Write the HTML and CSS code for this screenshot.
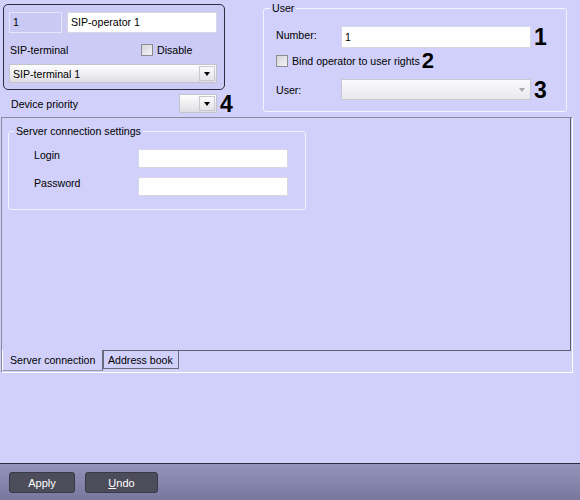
FILE: index.html
```html
<!DOCTYPE html>
<html>
<head>
<meta charset="utf-8">
<link rel="stylesheet" href="styles.css">
</head>
<body>
<div class="window">
  <div class="top">
    <div class="left-col">
      <div class="op-panel">
        <div class="op-row">
          <div class="field field-id">1</div>
          <div class="field field-name">SIP-operator 1</div>
        </div>
        <div class="term-row">
          <span class="term-label">SIP-terminal</span>
          <span class="check"><span class="box"></span>Disable</span>
        </div>
        <div class="combo combo-term">
          <span class="combo-text">SIP-terminal 1</span>
          <span class="combo-btn"><span class="arrow"></span></span>
        </div>
      </div>
      <div class="prio-row">
        <span class="prio-label">Device priority</span>
        <div class="combo combo-prio">
          <span class="combo-text"></span>
          <span class="combo-btn"><span class="arrow"></span></span>
        </div>
        <span class="num">4</span>
      </div>
    </div>
    <fieldset class="group user-group">
      <legend>User</legend>
      <div class="u-row">
        <span class="u-label u-label-num">Number:</span>
        <div class="field field-number">1</div>
        <span class="num">1</span>
      </div>
      <div class="u-row u-row-check">
        <span class="check"><span class="box"></span>Bind operator to user rights</span>
        <span class="num num-small">2</span>
      </div>
      <div class="u-row u-row-user">
        <span class="u-label">User:</span>
        <div class="combo combo-user">
          <span class="combo-text"></span>
          <span class="combo-btn-flat"><span class="arrow arrow-dis"></span></span>
        </div>
        <span class="num">3</span>
      </div>
    </fieldset>
  </div>

  <div class="tabctl">
    <div class="page">
      <fieldset class="group conn-group">
        <legend>Server connection settings</legend>
        <div class="c-row">
          <span class="c-label">Login</span>
          <div class="field field-conn"></div>
        </div>
        <div class="c-row c-row-2">
          <span class="c-label">Password</span>
          <div class="field field-conn"></div>
        </div>
      </fieldset>
    </div>
    <div class="tabs">
      <div class="tab tab-active">Server connection</div>
      <div class="tab tab-idle">Address book</div>
    </div>
  </div>

  <div class="spacer"></div>

  <div class="bar">
    <div class="btn btn-apply">Apply</div>
    <div class="btn btn-undo"><u>U</u>ndo</div>
  </div>
</div>
</body>
</html>
```
FILE: styles.css
```css
* { box-sizing: border-box; }
html, body { margin: 0; padding: 0; }
body {
  font-family: "Liberation Sans", Arial, sans-serif;
  font-size: 10.6px;
  color: #000;
  background: #d0d0fa;
}
.window {
  width: 580px;
  height: 500px;
  display: flex;
  flex-direction: column;
  background: #d0d0fa;
  overflow: hidden;
}

/* ---------- top area ---------- */
.top {
  height: 117px;
  display: flex;
  flex-shrink: 0;
}
.left-col {
  margin-left: 3px;
  padding-top: 4px;
  width: 231px;
}
.op-panel {
  width: 222px;
  height: 86px;
  border: 1px solid #2c2c44;
  border-radius: 5px;
  background: #cbcbf5;
  padding: 7px 7px 0 5px;
}
.op-row {
  display: flex;
  gap: 5px;
  height: 21px;
}
.field {
  height: 100%;
  border: 1px solid #d8d8e4;
  background: #fff;
  padding-left: 3px;
  display: flex;
  align-items: center;
  line-height: 13px;
}
.field-id {
  width: 53px;
  background: #c9c9f3;
  border-color: #e6e6ff;
}
.field-name { width: 150px; }

.term-row {
  margin-top: 10px;
  height: 13px;
  display: flex;
  align-items: center;
  padding-left: 1px;
}
.term-label { width: 131px; }
.check {
  display: inline-flex;
  align-items: center;
}
.box {
  width: 12px;
  height: 12px;
  border: 1px solid #8c8c94;
  background: linear-gradient(135deg, #d4d4d8 0%, #f4f4f6 100%);
  margin-right: 4px;
  flex-shrink: 0;
}
.combo {
  display: flex;
  align-items: center;
  border: 1px solid #c4c4cc;
  background: linear-gradient(#ffffff, #dedee4);
}
.combo-text {
  flex: 1;
  padding-left: 3px;
}
.combo-btn {
  width: 16px;
  height: 15px;
  margin-right: 1px;
  border: 1px solid #c8c8d0;
  background: linear-gradient(#fafafa, #e4e4e8);
  display: flex;
  align-items: center;
  justify-content: center;
}
.combo-btn-flat {
  width: 16px;
  height: 15px;
  display: flex;
  align-items: center;
  justify-content: center;
}
.arrow {
  width: 0;
  height: 0;
  border-left: 3.5px solid transparent;
  border-right: 3.5px solid transparent;
  border-top: 4px solid #000;
}
.arrow-dis { border-top-color: #a8a8b0; }
.combo-term {
  margin-top: 8px;
  width: 208px;
  height: 19px;
}
.prio-row {
  margin-top: 4px;
  height: 19px;
  display: flex;
  align-items: center;
}
.prio-label {
  width: 176px;
  padding-left: 8px;
}
.combo-prio {
  width: 38px;
  height: 19px;
}
.num {
  font-weight: bold;
  font-size: 23px;
  line-height: 18px;
  margin-left: 3px;
}
.num-small { font-size: 22px; margin-left: 2px; }

/* ---------- group boxes ---------- */
.group {
  margin: 0;
  border: 1px solid #f4f4ff;
  border-radius: 3px;
}
.group legend {
  padding: 0 2px;
  line-height: 13px;
  margin-left: 6px;
}
.user-group {
  margin-left: 29px;
  margin-top: 2px;
  width: 304px;
  height: 110px;
  padding: 11px 0 0 0;
}
.u-row {
  display: flex;
  align-items: center;
  height: 22px;
  padding-left: 12px;
}
.u-label { width: 65px; }
.u-label-num { margin-top: -4px; }
.field-number { width: 190px; height: 22px; }
.u-row-check { margin-top: 2px; }
.u-row-user { margin-top: 7px; height: 21px; }
.combo-user {
  width: 190px;
  height: 21px;
  border-color: #c8c8d2;
  background: linear-gradient(#fbfbfd, #e8e8ee);
}

/* ---------- tab control ---------- */
.tabctl {
  flex-shrink: 0;
  height: 256px;
  margin-left: 1px;
  width: 572px;
  border-top: 1px solid #8a8a9c;
  border-left: 1px solid #8a8a9c;
  border-right: 1px solid #ffffff;
  border-bottom: 1px solid #ffffff;
  display: flex;
  flex-direction: column;
}
.page {
  height: 233px;
  margin-right: 1px;
  border-right: 1px solid #5e5e72;
  border-bottom: 1px solid #5e5e72;
  padding: 7px 0 0 6px;
}
.conn-group {
  width: 298px;
  height: 85px;
  padding: 11px 0 0 0;
}
.conn-group legend { margin-left: 5px; }
.c-row {
  display: flex;
  align-items: flex-start;
  height: 19px;
  padding-left: 25px;
}
.c-row-2 { margin-top: 9px; }
.c-label { width: 104px; line-height: 13px; }
.field-conn { width: 150px; height: 19px; }

.tabs {
  display: flex;
  height: 21px;
}
.tab {
  display: flex;
  align-items: center;
}
.tab-active {
  width: 101px;
  height: 21px;
  padding-left: 7px;
  border-left: 1px solid #ffffff;
  border-right: 1px solid #6a6a7e;
  border-bottom: 1px solid #9a9aae;
  margin-top: -1px;
  background: #d0d0fa;
}
.tab-idle {
  width: 76px;
  height: 18px;
  padding-left: 4px;
  border: 1px solid #6a6a7e;
  border-top: none;
}

.spacer { flex: 1; }

/* ---------- bottom bar ---------- */
.bar {
  flex-shrink: 0;
  height: 37px;
  border-top: 1px solid #2e2e42;
  background: linear-gradient(#9494ba, #78789e);
  display: flex;
  align-items: flex-start;
  padding: 8px 0 0 9px;
  gap: 10px;
}
.btn {
  height: 21px;
  border: 1px solid #38384a;
  border-radius: 3px;
  background: #4c4c5a;
  color: #fff;
  display: flex;
  align-items: center;
  justify-content: center;
  font-size: 11px;
}
.btn-apply { width: 66px; }
.btn-undo { width: 73px; }
```
